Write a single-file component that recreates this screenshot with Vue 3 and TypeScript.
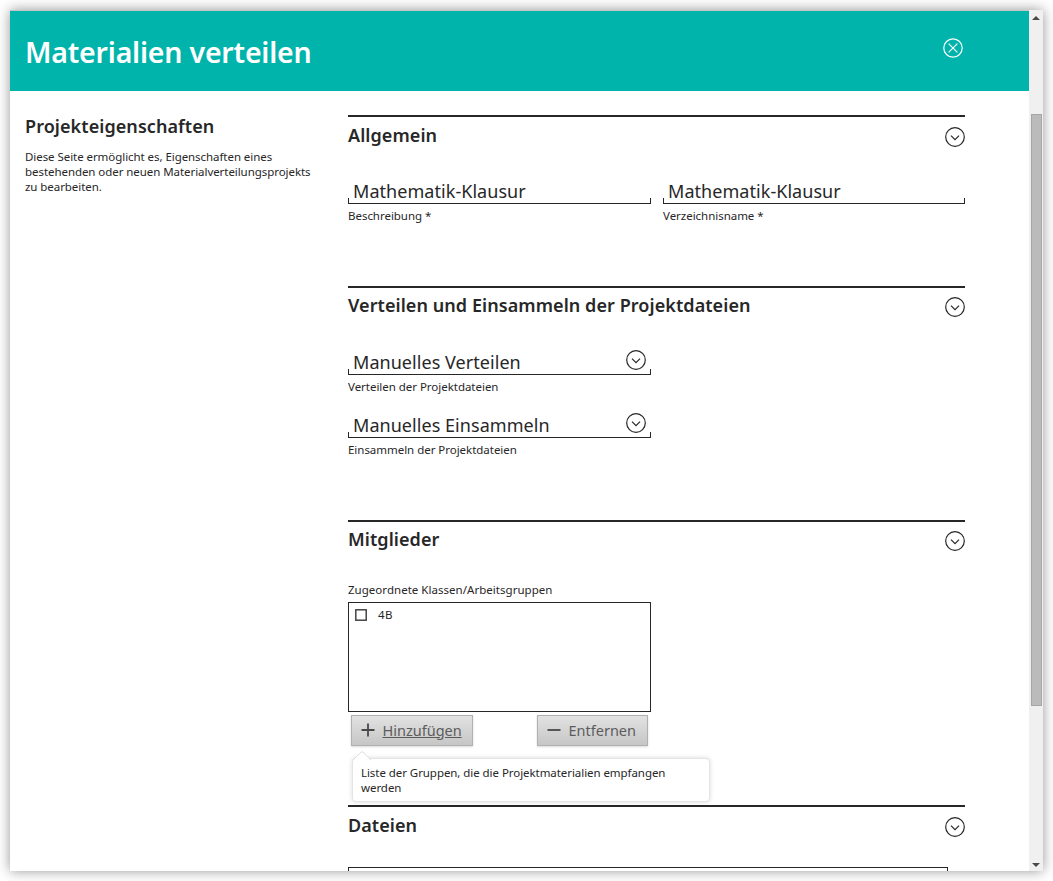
<script setup lang="ts">
import { ref } from 'vue'

interface Field {
  value: string
  label: string
}

const general: Field[] = [
  { value: 'Mathematik-Klausur', label: 'Beschreibung *' },
  { value: 'Mathematik-Klausur', label: 'Verzeichnisname *' },
]
const modes: Field[] = [
  { value: 'Manuelles Verteilen', label: 'Verteilen der Projektdateien' },
  { value: 'Manuelles Einsammeln', label: 'Einsammeln der Projektdateien' },
]
const groups = ref([{ name: '4B', checked: false }])
</script>

<template>
  <div class="dialog">
    <div class="page">
      <header class="header">
        <h1>Materialien verteilen</h1>
        <svg class="round" viewBox="0 0 20 20">
          <circle cx="10" cy="10" r="9.2" />
          <path d="M5.6 5.6l8.8 8.8M14.4 5.6l-8.8 8.8" />
        </svg>
      </header>
      <div class="body">
        <aside>
          <h2>Projekteigenschaften</h2>
          <p>Diese Seite ermöglicht es, Eigenschaften eines<br />bestehenden oder neuen Materialverteilungsprojekts<br />zu bearbeiten.</p>
        </aside>
        <main>
          <section class="general">
            <div class="head">
              <h2>Allgemein</h2>
              <svg class="round" viewBox="0 0 20 20"><circle cx="10" cy="10" r="9.3" /><path d="M6 8.6l4 4 4-4" /></svg>
            </div>
            <div class="fields">
              <div v-for="f in general" :key="f.label" class="field">
                <div class="input"><span>{{ f.value }}</span></div>
                <label>{{ f.label }}</label>
              </div>
            </div>
          </section>
          <section class="distribution">
            <div class="head">
              <h2>Verteilen und Einsammeln der Projektdateien</h2>
              <svg class="round" viewBox="0 0 20 20"><circle cx="10" cy="10" r="9.3" /><path d="M6 8.6l4 4 4-4" /></svg>
            </div>
            <div class="fields">
              <div v-for="f in modes" :key="f.label" class="field first">
                <div class="input">
                  <span>{{ f.value }}</span>
                  <svg class="round" viewBox="0 0 20 20"><circle cx="10" cy="10" r="9.3" /><path d="M6 8.6l4 4 4-4" /></svg>
                </div>
                <label>{{ f.label }}</label>
              </div>
            </div>
          </section>
          <section class="members">
            <div class="head">
              <h2>Mitglieder</h2>
              <svg class="round" viewBox="0 0 20 20"><circle cx="10" cy="10" r="9.3" /><path d="M6 8.6l4 4 4-4" /></svg>
            </div>
            <div class="caption">Zugeordnete Klassen/Arbeitsgruppen</div>
            <div class="listbox">
              <div v-for="g in groups" :key="g.name" class="item" @click="g.checked = !g.checked">
                <svg class="check" viewBox="0 0 12 12"><rect x=".8" y=".8" width="10.4" height="10.4" :class="{ on: g.checked }" /></svg>
                <span>{{ g.name }}</span>
              </div>
            </div>
            <div class="buttons">
              <button class="add">
                <svg viewBox="0 0 14 14"><path d="M7 .5v13M.5 7h13" /></svg><span>Hinzufügen</span>
              </button>
              <button class="remove">
                <svg viewBox="0 0 14 14"><path d="M.5 7h13" /></svg><span>Entfernen</span>
              </button>
            </div>
            <div class="tooltip">
              <svg viewBox="0 0 18 9"><path d="M0 9L8 1.2Q9 .3 10 1.2L18 9" /></svg>
              Liste der Gruppen, die die Projektmaterialien empfangen<br />werden
            </div>
          </section>
          <section class="files">
            <div class="head">
              <h2>Dateien</h2>
              <svg class="round" viewBox="0 0 20 20"><circle cx="10" cy="10" r="9.3" /><path d="M6 8.6l4 4 4-4" /></svg>
            </div>
            <div class="filebox"></div>
          </section>
        </main>
      </div>
    </div>
    <div class="scrollbar">
      <svg viewBox="0 0 8 4"><path d="M0 4L4 0l4 4z" /></svg>
      <div class="track"><div class="thumb"></div></div>
      <svg viewBox="0 0 8 4"><path d="M0 0h8L4 4z" /></svg>
    </div>
  </div>
</template>

<style>
html,
body {
  margin: 0;
  height: 881px;
  overflow: hidden;
  background: #fff;
}
</style>

<style scoped>
* {
  box-sizing: border-box;
}
.dialog {
  display: flex;
  width: 1033px;
  height: 861px;
  margin: 10px;
  background: #fff;
  box-shadow: 0 0 12px rgba(0, 0, 0, 0.42);
  font-family: 'Noto Sans', sans-serif;
  font-size: 11.5px;
  line-height: 15px;
  letter-spacing: -0.06px;
  color: #272728;
}
.page {
  width: 1019px;
  height: 861px;
  border-top: 1px solid #c4c8c8;
  overflow: hidden;
}
.header {
  display: flex;
  justify-content: space-between;
  height: 80px;
  padding: 0 66px 0 15px;
  background: #00b4ab;
  color: #fff;
}
h1 {
  margin: 20px 0 0;
  font-size: 28.5px;
  line-height: 42px;
  font-weight: 650;
  font-weight: 600;
  letter-spacing: -0.2px;
  white-space: nowrap;
}
.round {
  flex: none;
  width: 20px;
  height: 20px;
  fill: none;
  stroke: #272728;
  stroke-width: 1.2;
}
.header .round {
  margin-top: 27px;
  stroke: #fff;
}
.body {
  display: flex;
  padding: 24px 64px 0 15px;
}
aside {
  width: 323px;
}
h2 {
  margin: 0;
  font-size: 18px;
  line-height: 24px;
  font-weight: 600;
  letter-spacing: 0.07px;
  white-space: nowrap;
}
aside h2 {
  margin-top: -1px;
}
aside p {
  margin: 11px 0 0;
  white-space: nowrap;
}
main {
  width: 617px;
}
section {
  border-top: 2px solid #272728;
}
.general {
  height: 171px;
}
.distribution {
  height: 234px;
}
.members {
  height: 285px;
}
.head {
  display: flex;
  justify-content: space-between;
  height: 53px;
  padding-top: 6px;
}
.head .round {
  margin-top: 4px;
}
.distribution .head,
.members .head {
  padding-top: 5px;
}
.fields {
  display: grid;
  grid-template-columns: 303px 302px;
  column-gap: 12px;
}
.field {
  height: 63px;
}
.first {
  grid-column: 1;
}
.input {
  display: flex;
  justify-content: space-between;
  height: 34px;
  padding: 9px 5px 0 5px;
  font-size: 18px;
  line-height: 24px;
  letter-spacing: 0.05px;
  background:
    linear-gradient(#272728, #272728) left bottom / 100% 1px no-repeat,
    linear-gradient(#272728, #272728) left bottom / 1px 6px no-repeat,
    linear-gradient(#272728, #272728) right bottom / 1px 6px no-repeat;
}
label {
  display: block;
  margin-top: 4px;
  letter-spacing: -0.03px;
}
.caption {
  margin-top: 7px;
  letter-spacing: 0.03px;
}
.listbox {
  width: 303px;
  height: 110px;
  margin-top: 5px;
  padding: 4px 6px;
  border: 1px solid #272728;
}
.item {
  display: flex;
  align-items: center;
}
.check {
  width: 12px;
  height: 12px;
  margin-right: 11px;
  fill: none;
  stroke: #444;
  stroke-width: 1.5;
}
.check .on {
  fill: #444;
}
.item span {
  letter-spacing: 0.4px;
}
.buttons {
  display: flex;
  justify-content: space-between;
  width: 303px;
  padding: 3px 3px 0;
}
button {
  display: flex;
  align-items: center;
  height: 31px;
  padding: 0 0 2px 9px;
  border: 1px solid #b0b0b0;
  background: linear-gradient(#e2e2e2, #c6c6c6);
  box-shadow: 0 1px 2px rgba(0, 0, 0, 0.15);
  color: #5c5c5c;
  font: 14.5px/20px 'Noto Sans', sans-serif;
  letter-spacing: 0;
}
button svg {
  width: 14px;
  height: 14px;
  margin-right: 7.5px;
  fill: none;
  stroke: #484848;
  stroke-width: 1.8;
}
.add {
  width: 122px;
}
.remove {
  width: 111px;
}
.add span {
  text-decoration: underline;
}
.tooltip {
  position: relative;
  width: 358px;
  height: 44px;
  margin: 12px 0 0 4px;
  padding: 6px 8px;
  border: 1px solid #e4e4e4;
  border-radius: 4px;
  background: #fff;
  box-shadow: 0 0 5px rgba(0, 0, 0, 0.14);
  white-space: nowrap;
}
.tooltip svg {
  position: absolute;
  left: 0;
  top: -8px;
  width: 18px;
  height: 9px;
  fill: #fff;
  stroke: #dedede;
}
.filebox {
  width: 600px;
  height: 60px;
  margin-top: 7px;
  border: 1px solid #272728;
}
.scrollbar {
  display: flex;
  flex-direction: column;
  align-items: center;
  width: 14px;
  padding: 6px 0 4px;
  background: #f0f0f0;
}
.scrollbar svg {
  width: 8px;
  height: 4px;
  fill: #484848;
}
.track {
  flex: 1;
  padding-top: 94px;
}
.thumb {
  width: 11px;
  height: 592px;
  border: 1px solid #a6a6a6;
  background: #bbb;
}
</style>
